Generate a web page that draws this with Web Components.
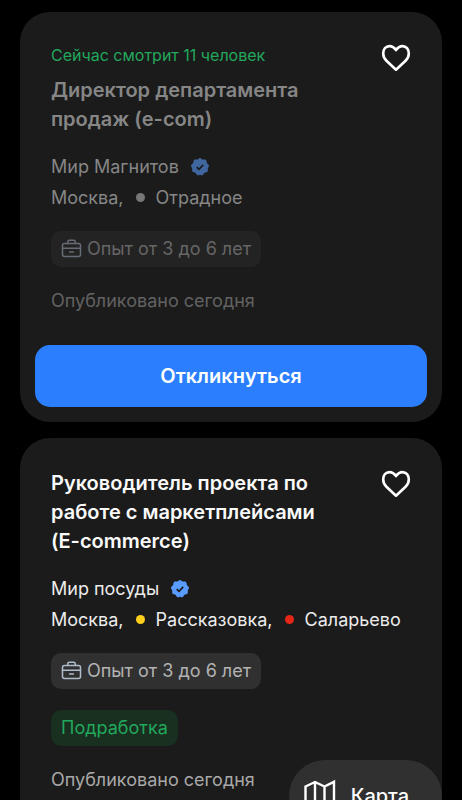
<!DOCTYPE html>
<html lang="ru">
<head>
<meta charset="utf-8">
<meta name="viewport" content="width=device-width, initial-scale=1">
<title>Вакансии</title>
<style>
  html, body { margin: 0; height: 100%; background: #000; overflow: hidden; }
  body { font-family: Inter, "Liberation Sans", sans-serif; font-optical-sizing: none; color: #f5f5f5; }
  .keep { white-space: nowrap; }
</style>
</head>
<body>
<vacancy-feed>
  <vacancy-card viewed>
    <span slot="watching">Сейчас смотрит 11 человек</span>
    <span slot="title">Директор департамента продаж (e-com)</span>
    <span slot="company">Мир Магнитов</span>
    <span slot="place">Москва,</span>
    <metro-station slot="place" style="--line:#777">Отрадное</metro-station>
    <info-chip slot="chips" icon>Опыт от 3 до 6 лет</info-chip>
    <span slot="date">Опубликовано сегодня</span>
    <apply-button slot="action">Откликнуться</apply-button>
  </vacancy-card>
  <vacancy-card>
    <span slot="title">Руководитель проекта по работе с маркетплейсами <span class="keep">(E-commerce)</span></span>
    <span slot="company">Мир посуды</span>
    <span slot="place">Москва,</span>
    <metro-station slot="place" style="--line:#ffcd1c">Рассказовка,</metro-station>
    <metro-station slot="place" style="--line:#e42518">Саларьево</metro-station>
    <info-chip slot="chips" icon>Опыт от 3 до 6 лет</info-chip>
    <info-chip slot="chips" accent>Подработка</info-chip>
    <span slot="date">Опубликовано сегодня</span>
  </vacancy-card>
  <map-button slot="floating">Карта</map-button>
</vacancy-feed>

<script>
const define = (name, html) => {
  const template = document.createElement('template');
  template.innerHTML = html;
  customElements.define(name, class extends HTMLElement {
    constructor() {
      super();
      this.attachShadow({ mode: 'open' }).append(template.content.cloneNode(true));
    }
  });
};

define('vacancy-feed', `
  <style>
    :host { display: block; height: 100vh; overflow-y: auto; scrollbar-width: none; }
    main { display: flex; flex-direction: column; gap: 16px; padding: 12px 20px; }
  </style>
  <main><slot></slot></main>
  <slot name="floating"></slot>`);

define('favorite-button', `
  <style>
    :host { display: block; }
    button { display: block; padding: 0; border: 0; background: none; color: #fff; cursor: pointer; }
    svg { display: block; }
  </style>
  <button type="button" aria-label="В избранное" aria-pressed="false">
    <svg width="30" height="28" viewBox="0 0 30 28" fill="none" stroke="currentColor" stroke-width="2.6" stroke-linejoin="round" stroke-linecap="round">
      <path d="M15 6.1C12.8 2.9 10.7 2.1 8.5 2.1C4.8 2.1 2.2 5.2 2.2 9.4C2.2 12.5 3.4 14.8 5.7 17L15 25.7L24.3 17C26.6 14.8 27.8 12.5 27.8 9.4C27.8 5.2 25.2 2.1 21.5 2.1C19.3 2.1 17.2 2.9 15 6.1Z"/>
    </svg>
  </button>`);

define('verified-badge', `
  <style>
    :host { display: block; color: #5a9bff; }
    svg { display: block; }
  </style>
  <svg width="20" height="20" viewBox="0 0 20 20" role="img" aria-label="Проверенная компания">
    <path fill="currentColor" d="M10 1C11.2 1 11.7 2.3 12.7 2.5C13.8 2.8 15 2.1 15.9 2.9C16.9 3.7 16.4 5 16.9 5.9C17.4 6.9 18.8 7.2 19 8.4C19.2 9.6 18 10.3 17.8 11.4C17.6 12.4 18.3 13.6 17.5 14.6C16.8 15.5 15.5 15.2 14.6 15.8C13.7 16.4 13.6 17.8 12.4 18.3C11.4 18.7 10.8 17.8 10 17.8C9.2 17.8 8.6 18.7 7.6 18.3C6.4 17.8 6.3 16.4 5.4 15.8C4.5 15.2 3.2 15.5 2.5 14.6C1.7 13.6 2.4 12.4 2.2 11.4C2 10.3.8 9.6 1 8.4C1.2 7.2 2.6 6.9 3.1 5.9C3.6 5 3.1 3.7 4.1 2.9C5 2.1 6.2 2.8 7.3 2.5C8.3 2.3 8.8 1 10 1Z"/>
    <path d="M6.7 10.1L9 12.3L13.2 7.9" fill="none" stroke="#1b1b1b" stroke-width="1.7"/>
  </svg>`);

define('metro-station', `
  <style>
    :host { display: flex; align-items: center; gap: 11px; }
    i { width: 9px; height: 9px; border-radius: 50%; background: var(--line); }
  </style>
  <i></i><span><slot></slot></span>`);

define('info-chip', `
  <style>
    :host { display: flex; align-items: center; gap: 5px; box-sizing: border-box; height: 36px; padding: 0 10px;
      border-radius: 10px; background: var(--chip-bg, #303030); color: var(--chip-fg, #b3b3b3); font-size: 18px; line-height: 24px; }
    :host([accent]) { background: #192f20; color: #22a85c; }
    svg { display: none; color: var(--chip-icon, #aebccb); }
    :host([icon]) svg { display: block; }
  </style>
  <svg width="21" height="20" viewBox="0 0 21 20" fill="none" stroke="currentColor" stroke-width="1.5" stroke-linecap="round" stroke-linejoin="round" aria-hidden="true">
    <rect x="1.5" y="4.5" width="18" height="13" rx="2"/>
    <path d="M6.7 4.5V3Q6.7 1.3 8.4 1.3H12.6Q14.3 1.3 14.3 3V4.5M1.5 9.3H19.5M8.6 13H12.4"/>
  </svg>
  <span><slot></slot></span>`);

define('apply-button', `
  <style>
    :host { display: block; }
    button { display: block; width: 100%; height: 62px; border: 0; border-radius: 15px; background: #2b7fff; color: #fff;
      font: 600 20px/28px Inter, "Liberation Sans", sans-serif; font-optical-sizing: none; cursor: pointer; }
  </style>
  <button type="button"><slot></slot></button>`);

define('vacancy-card', `
  <style>
    :host { display: block; border-radius: 30px; background: #1b1b1b; padding: 31px 15px 15px; font-size: 18px; }
    :host(:not([viewed])) { padding-bottom: 64px; }
    :host([viewed]) { --chip-bg: #232323; --chip-fg: #666; --chip-icon: #666c76; }
    .body { padding: 0 16px; }
    .head { display: flex; gap: 12px; align-items: flex-start; }
    .text { flex: 1; min-width: 0; }
    .watching { display: none; margin-bottom: 9px; font-size: 16px; line-height: 24px; color: #22a85c; }
    :host([viewed]) .watching { display: block; }
    h2 { margin: 0; font-size: 20px; line-height: 29px; font-weight: 600; color: #fafafa; }
    favorite-button { padding-top: 1px; }
    .info { margin-top: 17px; line-height: 31px; color: #ececec; }
    .company { display: flex; align-items: center; gap: 11px; }
    .place { display: flex; flex-wrap: wrap; gap: 0 12px; }
    .chips { display: flex; flex-direction: column; align-items: flex-start; gap: 21px; margin: 18px 0 22px; }
    .date { line-height: 24px; color: #a8a8a8; }
    :host([viewed]) h2, :host([viewed]) .info { color: #868686; }
    :host([viewed]) .date { color: #626262; }
    :host([viewed]) verified-badge { color: #40669f; }
    slot[name="action"]::slotted(*) { margin-top: 32px; }
  </style>
  <article>
    <div class="body">
      <div class="head">
        <div class="text">
          <div class="watching"><slot name="watching"></slot></div>
          <h2><slot name="title"></slot></h2>
        </div>
        <favorite-button></favorite-button>
      </div>
      <div class="info">
        <div class="company"><slot name="company"></slot><verified-badge></verified-badge></div>
        <div class="place"><slot name="place"></slot></div>
      </div>
      <div class="chips"><slot name="chips"></slot></div>
      <div class="date"><slot name="date"></slot></div>
    </div>
    <slot name="action"></slot>
  </article>`);

define('map-button', `
  <style>
    :host { position: fixed; right: 20px; bottom: -32px; }
    button { display: flex; align-items: center; gap: 14px; height: 72px; padding: 0 33px 0 14px; border: 0; border-radius: 36px;
      background: #303030; color: #fff; font: 500 20px/28px Inter, "Liberation Sans", sans-serif; font-optical-sizing: none; cursor: pointer; }
  </style>
  <button type="button">
    <svg width="34" height="34" viewBox="0 0 34 34" fill="none" stroke="currentColor" stroke-width="2.4" aria-hidden="true">
      <path d="M2.5 7.5L12 3L21.5 7.5L31 2.8V26.5L21.5 31L12 26.5L2.5 31ZM12 3V26.5M21.5 7.5V31"/>
    </svg>
    <span><slot></slot></span>
  </button>`);
</script>
</body>
</html>
